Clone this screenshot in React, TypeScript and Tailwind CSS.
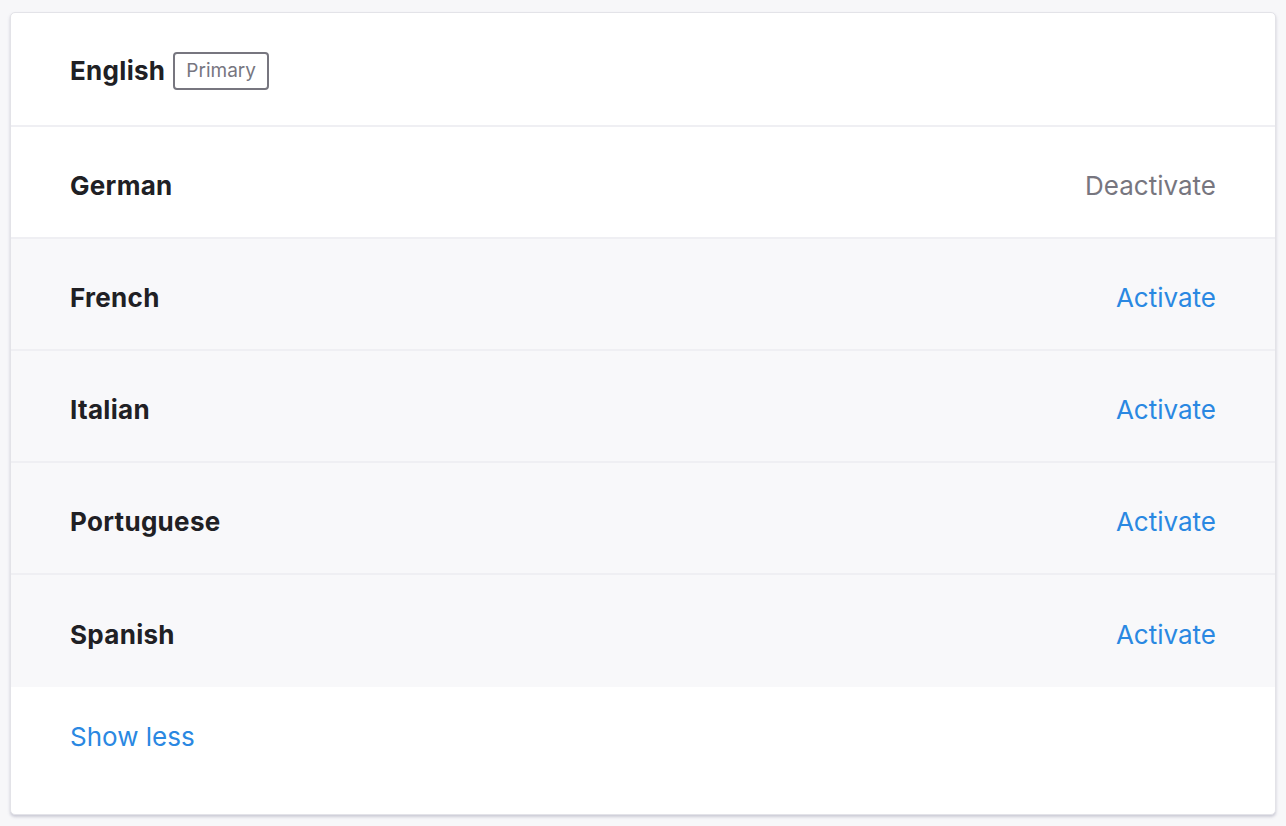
const languages = [
  { name: "German", active: true },
  { name: "French", active: false },
  { name: "Italian", active: false },
  { name: "Portuguese", active: false },
  { name: "Spanish", active: false },
];

export default function App() {
  return (
    <div
      className="min-h-[826px] bg-[#f7f7f9] px-[10px] pt-[12px]"
      style={{ fontFamily: "Inter, 'Liberation Sans', sans-serif" }}
    >
      <div className="overflow-hidden rounded-[5px] border border-[#e3e3e8] bg-white shadow-[0_2px_3px_rgba(120,120,150,0.35)]">
        <div className="flex h-[114px] items-center border-b-2 border-[#efeff3] px-[59px] pt-[2px]">
          <span className="text-[26px] font-bold tracking-[0.3px] text-[#202024]">English</span>
          <span className="ml-[8px] mt-[2px] rounded-[4px] border-2 border-[#77767f] px-[11px] py-[4px] text-[19px] leading-[26px] text-[#77767f]">
            Primary
          </span>
        </div>
        {languages.map((lang, i) => (
          <div
            key={lang.name}
            className={
              "flex h-[112px] items-center justify-between px-[59px] pt-[6px] " +
              (i < languages.length - 1 ? "border-b-2 border-[#efeff3] " : "") +
              (lang.active ? "bg-white" : "bg-[#f8f8fa]")
            }
          >
            <span className="text-[26px] font-bold tracking-[0.3px] text-[#202024]">{lang.name}</span>
            <span
              className={
                "text-[26px] " + (lang.active ? "text-[#77767f]" : "text-[#2a88e2]")
              }
            >
              {lang.active ? "Deactivate" : "Activate"}
            </span>
          </div>
        ))}
        <div className="flex h-[127px] items-start px-[59px] pt-[30px]">
          <span className="text-[26px] text-[#2a88e2]">Show less</span>
        </div>
      </div>
    </div>
  );
}
